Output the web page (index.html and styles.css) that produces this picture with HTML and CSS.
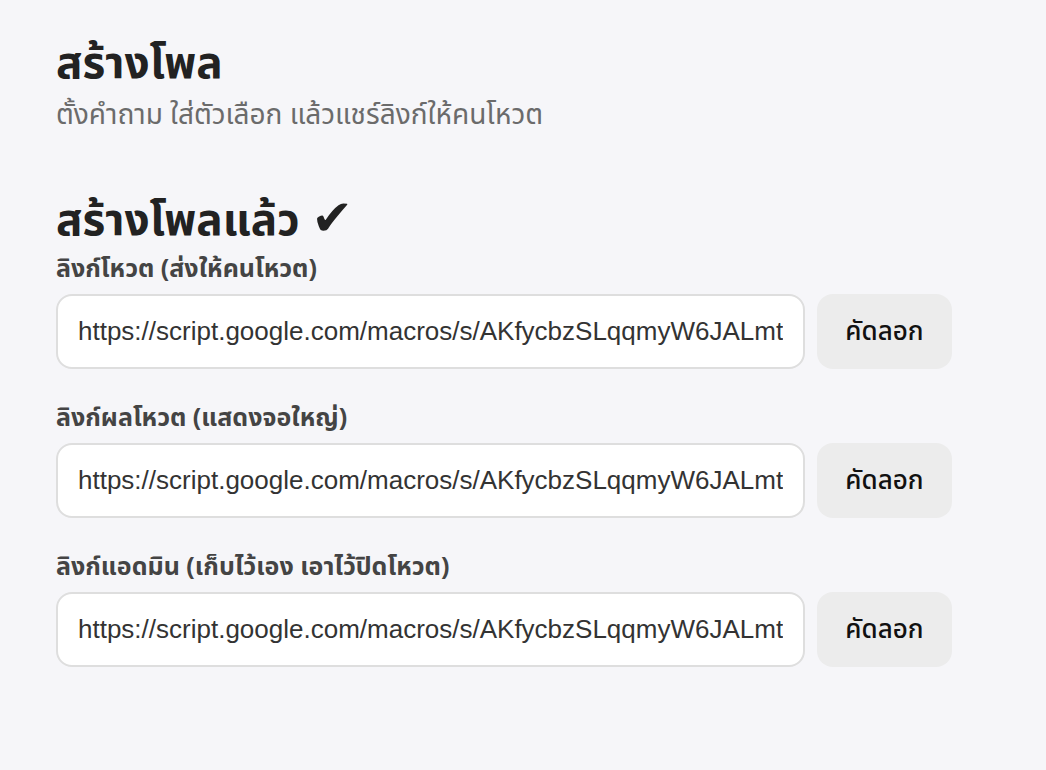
FILE: index.html
```html
<!DOCTYPE html>
<html lang="th">
<head>
<meta charset="utf-8">
<link rel="stylesheet" href="styles.css">
</head>
<body>
<main class="page">
  <header class="intro">
    <h1 class="title">สร้างโพล</h1>
    <p class="subtitle">ตั้งคำถาม ใส่ตัวเลือก แล้วแชร์ลิงก์ให้คนโหวต</p>
  </header>
  <section class="result">
    <h2 class="result-title">สร้างโพลแล้ว <span class="check">&#x2714;&#xFE0E;</span></h2>
    <div class="field">
      <label class="field-label">ลิงก์โหวต (ส่งให้คนโหวต)</label>
      <div class="field-row">
        <input class="link-input" type="text" readonly value="https://script.google.com/macros/s/AKfycbzSLqqmyW6JALmt">
        <button class="copy-btn" type="button">คัดลอก</button>
      </div>
    </div>
    <div class="field">
      <label class="field-label">ลิงก์ผลโหวต (แสดงจอใหญ่)</label>
      <div class="field-row">
        <input class="link-input" type="text" readonly value="https://script.google.com/macros/s/AKfycbzSLqqmyW6JALmt">
        <button class="copy-btn" type="button">คัดลอก</button>
      </div>
    </div>
    <div class="field">
      <label class="field-label">ลิงก์แอดมิน (เก็บไว้เอง เอาไว้ปิดโหวต)</label>
      <div class="field-row">
        <input class="link-input" type="text" readonly value="https://script.google.com/macros/s/AKfycbzSLqqmyW6JALmt">
        <button class="copy-btn" type="button">คัดลอก</button>
      </div>
    </div>
  </section>
</main>
</body>
</html>
```
FILE: styles.css
```css
html, body {
  margin: 0;
  padding: 0;
  background: #f6f6f9;
}
body {
  font-family: "Noto Sans", "Noto Sans Thai", "Noto Sans Thai UI", "DejaVu Sans", sans-serif;
  color: #222;
}
.page {
  width: 896px;
  padding: 30px 0 0 56px;
}
.title {
  margin: 0;
  font-size: 44px;
  font-weight: 700;
  line-height: 63px;
  color: #222;
}
.subtitle {
  margin: 0;
  font-size: 28px;
  line-height: 40px;
  color: #6b6b6b;
}
.result {
  margin-top: 55px;
}
.result-title {
  margin: 0;
  font-size: 44px;
  font-weight: 700;
  line-height: 61px;
  color: #222;
}
.check {
  font-family: "DejaVu Sans", sans-serif;
  font-size: 50px;
  font-weight: 400;
  line-height: 0;
}
.field {
  margin-bottom: 29px;
}
.field-label {
  display: block;
  font-size: 25px;
  font-weight: 700;
  line-height: 36px;
  color: #444;
  margin-bottom: 9px;
}
.field-row {
  display: flex;
  gap: 12px;
}
.link-input {
  flex: 1;
  min-width: 0;
  height: 75px;
  box-sizing: border-box;
  border: 2px solid #dedede;
  border-radius: 16px;
  background: #fff;
  padding: 0 20px;
  font-family: "Liberation Sans", Arial, sans-serif;
  font-size: 26px;
  color: #333;
  outline: none;
}
.copy-btn {
  width: 135px;
  height: 75px;
  border: none;
  border-radius: 16px;
  background: #ececec;
  font-family: "Noto Sans", "Noto Sans Thai", "DejaVu Sans", sans-serif;
  font-size: 26px;
  font-weight: 500;
  color: #111;
  cursor: pointer;
}
```
